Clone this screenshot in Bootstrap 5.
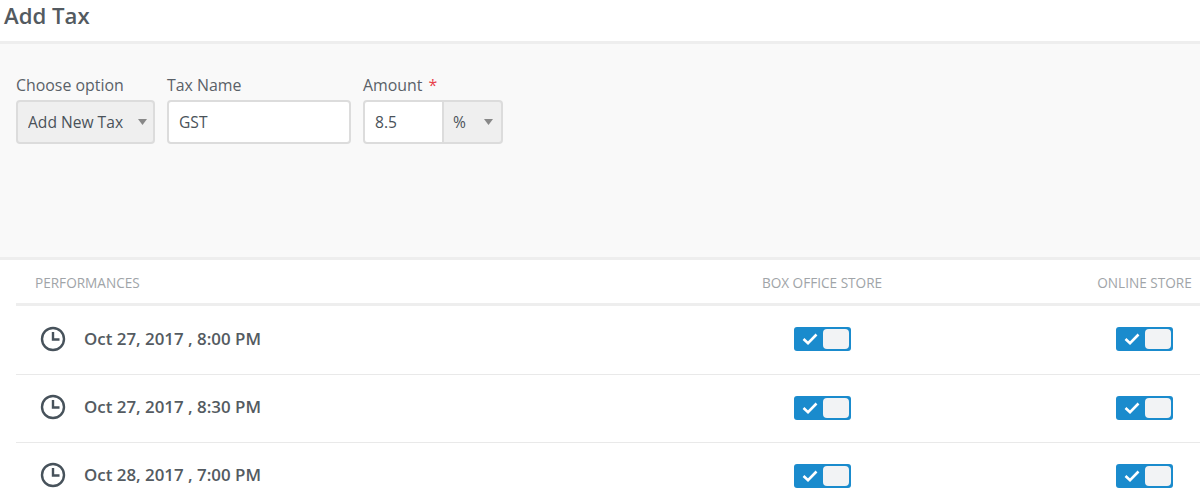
<!DOCTYPE html>
<html lang="en">
<head>
<meta charset="utf-8">
<title>Add Tax</title>
<link rel="stylesheet" href="https://cdn.jsdelivr.net/npm/bootstrap@5.3.0/dist/css/bootstrap.min.css">
<style>
html,body{height:100%;overflow:hidden}
body{font-family:"Open Sans","Liberation Sans",sans-serif;color:#4a5259;background:#fff}
.tax-head{height:44px;border-bottom:3px solid #eeeeee;padding:0 0 0 4px}
.tax-head h1{font-size:22.2px;font-weight:600;line-height:31px;margin:0;color:#535a60}
.tax-panel{height:213px;background:#f9f9f9;padding:33px 16px 0;gap:12px;border-bottom:0}
.fld label{display:block;font-size:15.9px;line-height:17px;margin:0 0 6px;color:#5a6168}
.req{color:#e8414a;margin-left:2px}
.fld .form-select,.fld .form-control,.fld .amt-unit{height:44px;border:2px solid #dcdcdc;border-radius:4px;font-size:15.6px;color:#4a5259;box-shadow:none;line-height:20px}
.fld .form-select{background-color:#efefef;padding:0 22px 0 10px;background-position:right 6px center;background-size:9px 6px;background-image:url("data:image/svg+xml,%3Csvg xmlns='http://www.w3.org/2000/svg' viewBox='0 0 9 6'%3E%3Cpath fill='%23888' d='M0 0h9L4.5 6z'/%3E%3C/svg%3E")}
.w-opt{width:139px}
.w-name{width:184px}
.w-amt{width:140px}
.fld .form-control{padding:0 10px;background:#fff}
.fld .amt-val{width:80px;flex:none;border-right-width:1px;border-top-right-radius:0;border-bottom-right-radius:0}
.fld .amt-unit{width:60px;flex:none;margin-left:0!important;padding:0 22px 0 9px;border-left-width:1px;border-top-left-radius:0;border-bottom-left-radius:0;background-position:right 8px center}
.tax-rule{height:3px;background:#eeeeee}
.perf-wrap{padding-left:16px}
.perf-table{table-layout:fixed;width:1184px;margin:0;--bs-table-color:#4a5259}
.perf-table th{height:44px;padding:4px 0 0;border-bottom:3px solid #eeeeee;font-size:13.6px;font-weight:400;color:#a0a4a8;vertical-align:middle}
.perf-table th:first-child{padding-left:19px}
.perf-table td{height:68px;padding:0 0 2px;border-bottom:1px solid #e9e9e9;vertical-align:middle}
.perf-table tbody tr:first-child td{height:70px}
.perf-table .c2{width:534px;text-align:center}
.perf-table .c3{width:111px;text-align:center}
.when{font-size:16.9px;font-weight:600;gap:18px;padding-left:24px;color:#545b61}
.when svg{flex:none}
.tgl{display:inline-flex;width:57px;height:24px;background:#1a8bcd;border-radius:3px;padding:2px;vertical-align:middle;justify-content:space-between;align-items:center}
.tgl svg{margin-left:6px}
.tgl i{display:block;width:26px;height:20px;background:#f2f3f5;border-radius:4px}
</style>
</head>
<body>
<header class="tax-head"><h1>Add Tax</h1></header>
<section class="tax-panel d-flex align-items-start">
  <div class="fld w-opt">
    <label for="o">Choose option</label>
    <select id="o" class="form-select"><option>Add New Tax</option></select>
  </div>
  <div class="fld w-name">
    <label for="n">Tax Name</label>
    <input id="n" class="form-control" value="GST">
  </div>
  <div class="fld w-amt">
    <label for="a">Amount <span class="req">*</span></label>
    <div class="input-group flex-nowrap">
      <input id="a" class="form-control amt-val" value="8.5">
      <select class="form-select amt-unit" aria-label="Unit"><option>%</option></select>
    </div>
  </div>
</section>
<div class="tax-rule"></div>
<div class="perf-wrap">
<table class="table perf-table">
  <thead><tr><th>PERFORMANCES</th><th class="c2">BOX OFFICE STORE</th><th class="c3">ONLINE STORE</th></tr></thead>
  <tbody>
    <tr><td><div class="when d-flex align-items-center"><svg width="26" height="26" viewBox="0 0 26 26" fill="none" stroke="#47525b" stroke-width="2.4"><circle cx="13" cy="13" r="11"/><path d="M13 6v7.5h6.5"/></svg>Oct 27, 2017 , 8:00 PM</div></td>
      <td class="c2"><span class="tgl"><svg width="16" height="12" viewBox="0 0 16 12" fill="none" stroke="#fff" stroke-width="2.6"><path d="M1.5 6l4.5 4.2L14.5 1.5"/></svg><i></i></span></td>
      <td class="c3"><span class="tgl"><svg width="16" height="12" viewBox="0 0 16 12" fill="none" stroke="#fff" stroke-width="2.6"><path d="M1.5 6l4.5 4.2L14.5 1.5"/></svg><i></i></span></td></tr>
    <tr><td><div class="when d-flex align-items-center"><svg width="26" height="26" viewBox="0 0 26 26" fill="none" stroke="#47525b" stroke-width="2.4"><circle cx="13" cy="13" r="11"/><path d="M13 6v7.5h6.5"/></svg>Oct 27, 2017 , 8:30 PM</div></td>
      <td class="c2"><span class="tgl"><svg width="16" height="12" viewBox="0 0 16 12" fill="none" stroke="#fff" stroke-width="2.6"><path d="M1.5 6l4.5 4.2L14.5 1.5"/></svg><i></i></span></td>
      <td class="c3"><span class="tgl"><svg width="16" height="12" viewBox="0 0 16 12" fill="none" stroke="#fff" stroke-width="2.6"><path d="M1.5 6l4.5 4.2L14.5 1.5"/></svg><i></i></span></td></tr>
    <tr><td><div class="when d-flex align-items-center"><svg width="26" height="26" viewBox="0 0 26 26" fill="none" stroke="#47525b" stroke-width="2.4"><circle cx="13" cy="13" r="11"/><path d="M13 6v7.5h6.5"/></svg>Oct 28, 2017 , 7:00 PM</div></td>
      <td class="c2"><span class="tgl"><svg width="16" height="12" viewBox="0 0 16 12" fill="none" stroke="#fff" stroke-width="2.6"><path d="M1.5 6l4.5 4.2L14.5 1.5"/></svg><i></i></span></td>
      <td class="c3"><span class="tgl"><svg width="16" height="12" viewBox="0 0 16 12" fill="none" stroke="#fff" stroke-width="2.6"><path d="M1.5 6l4.5 4.2L14.5 1.5"/></svg><i></i></span></td></tr>
  </tbody>
</table>
</div>
<script src="https://cdn.jsdelivr.net/npm/bootstrap@5.3.0/dist/js/bootstrap.bundle.min.js"></script>
</body>
</html>
